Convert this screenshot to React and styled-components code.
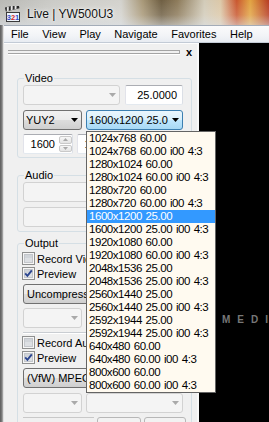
import React from "react";
import styled, { createGlobalStyle, css } from "styled-components";

const GlobalStyle = createGlobalStyle`
  html, body { margin: 0; padding: 0; width: 269px; height: 422px; overflow: hidden; background: #000; }
  #root { width: 269px; height: 422px; }
  * { box-sizing: border-box; }
`;

const FONT = `"Liberation Sans", Arial, sans-serif`;

const Window = styled.div`
  position: relative;
  width: 269px;
  height: 422px;
  overflow: hidden;
  display: flex;
  flex-direction: column;
  background: #000;
  font-family: ${FONT};
  font-size: 11px;
  color: #000;
`;

const TitleBar = styled.div`
  flex: none;
  height: 25px;
  display: flex;
  align-items: center;
  gap: 6px;
  padding: 3px 0 0 5px;
  background:
    linear-gradient(to bottom, rgba(255,255,255,0) 0%, rgba(255,255,255,0.15) 60%, rgba(225,230,236,0.55) 100%),
    linear-gradient(to right, #b9b9b5 0%, #cbcbc7 20%, #d3d2cd 45%, #a89878 53%, #6f5f43 60%, #8d7b5b 66%, #d2cbb9 76%, #dcc8a8 82%, #c9572f 88%, #e2a442 93%, #b63b22 100%);
`;

const TitleText = styled.span`
  font-size: 12px;
  color: #111;
  text-shadow: 0 0 5px rgba(255,255,255,0.95), 0 0 2px rgba(255,255,255,0.9);
  white-space: nowrap;
`;

const Body = styled.div`
  flex: 1;
  display: flex;
  min-height: 0;
`;

const Frame = styled.div`
  flex: none;
  width: 4px;
  background: linear-gradient(to right, #5c5c5c 0%, #858585 55%, #d6d6d6 80%, #eeeeee 100%);
`;

const Main = styled.div`
  flex: 1;
  display: flex;
  flex-direction: column;
  min-width: 0;
`;

const MenuBar = styled.div`
  flex: none;
  height: 18px;
  display: flex;
  align-items: center;
  gap: 13.5px;
  padding-left: 7px;
  background: linear-gradient(to bottom, #fbfbfc 0%, #f2f4f7 60%, #e8ecf2 100%);
  border-top: 1px solid #a3acb8;
  border-bottom: 1px solid #c3cbd6;
  white-space: nowrap;
`;

const MenuItem = styled.span`
  font-size: 11px;
  color: #000;
`;

const Content = styled.div`
  flex: 1;
  display: flex;
  min-height: 0;
`;

const Panel = styled.div`
  flex: none;
  width: 195px;
  display: flex;
  flex-direction: column;
  background: #f0f0f0;
  border-top: 1px solid #fdfdfd;
  box-shadow: inset -2px 0 0 #f9f9f9;
  overflow: hidden;
`;

const GripRow = styled.div`
  flex: none;
  display: flex;
  align-items: flex-start;
  height: 8px;
  margin: 4px 0 0 4px;
`;

const GripLines = styled.div`
  width: 172px;
  height: 4px;
  margin-top: 2px;
  border-top: 1px solid #a4a4a4;
  border-bottom: 1px solid #a4a4a4;
  border-right: 1px solid #a4a4a4;
  box-shadow: 0 1px 0 #ffffff;
`;

const CloseX = styled.span`
  margin-left: 6px;
  font-size: 11px;
  font-weight: bold;
  line-height: 8px;
  margin-top: 0;
`;

const Group = styled.fieldset`
  flex: none;
  width: 175px;
  min-width: 0;
  margin: ${(p) => p.$top}px 0 0 13px;
  padding: 0 5px ${(p) => p.$bottom}px 5px;
  border: 1px solid #d5dfe5;
  border-radius: 3px;
`;

const Legend = styled.legend`
  margin-left: 1px;
  padding: 0 1px;
  font-size: 11px;
  line-height: 14px;
`;

const Stack = styled.div`
  display: flex;
  flex-direction: column;
`;

const Row = styled.div`
  display: flex;
  gap: ${(p) => p.$gap ?? 4}px;
  margin-top: ${(p) => p.$mt ?? 0}px;
  height: ${(p) => p.$h ?? 20}px;
`;

const comboVariants = {
  disabled: css`
    background: #f4f4f4;
    border: 1px solid #d2d2d2;
    color: #8a8a8a;
  `,
  normal: css`
    background: linear-gradient(to bottom, #f2f2f2 0%, #ebebeb 48%, #dddddd 52%, #cfcfcf 100%);
    border: 1px solid #707070;
  `,
  hot: css`
    background: linear-gradient(to bottom, #eaf6fd 0%, #d9f0fc 48%, #bee6fd 52%, #a7d9f5 100%);
    border: 1px solid #3c7fb1;
  `,
};

const Combo = styled.div`
  flex: none;
  width: ${(p) => p.$w}px;
  height: 20px;
  display: flex;
  align-items: center;
  gap: 4px;
  padding: 0 3px 0 2px;
  border-radius: 3px;
  white-space: nowrap;
  overflow: hidden;
  ${(p) => comboVariants[p.$variant || "normal"]}
`;

const ComboText = styled.span`
  flex: 1;
  min-width: 0;
  overflow: hidden;
  white-space: nowrap;
`;

const Arrow = ({ color }) => (
  <svg width="7" height="4" viewBox="0 0 7 4" style={{ flex: "none" }}>
    <polygon points="0,0 7,0 3.5,4" fill={color} />
  </svg>
);

const TextBox = styled.div`
  flex: none;
  width: ${(p) => p.$w}px;
  height: 20px;
  display: flex;
  align-items: center;
  justify-content: flex-end;
  padding: 0 5px;
  background: #fff;
  border: 1px solid;
  border-color: #abadb3 #dbdfe6 #e3e9ef #e2e3ea;
  border-radius: 2px;
`;

const SpinBox = styled.div`
  flex: none;
  width: ${(p) => p.$w}px;
  height: 20px;
  display: flex;
  align-items: stretch;
  background: #fff;
  border: 1px solid;
  border-color: #abadb3 #dbdfe6 #e3e9ef #e2e3ea;
  border-radius: 2px;
`;

const SpinValue = styled.span`
  flex: 1;
  display: flex;
  align-items: center;
  justify-content: flex-end;
  padding: 0 4px 0 3px;
  overflow: hidden;
`;

const SpinButtons = styled.div`
  flex: none;
  width: 13px;
  display: flex;
  flex-direction: column;
  gap: 1px;
  padding: 1px 0;
`;

const SpinButton = styled.div`
  flex: 1;
  display: flex;
  align-items: center;
  justify-content: center;
  background: linear-gradient(to bottom, #f7f7f7, #e4e4e4);
  border: 1px solid #c9c9c9;
  border-radius: 2px;
`;

const SmallTri = ({ up }) => (
  <svg width="5" height="3" viewBox="0 0 5 3">
    <polygon points={up ? "0,3 5,3 2.5,0" : "0,0 5,0 2.5,3"} fill="#a9a9a9" />
  </svg>
);

const CheckRow = styled.div`
  display: flex;
  align-items: center;
  gap: 2px;
  height: 15px;
  margin-top: ${(p) => p.$mt ?? 0}px;
  margin-left: -1px;
  white-space: nowrap;
`;

const CheckBox = ({ checked }) => (
  <svg width="13" height="13" viewBox="0 0 13 13" style={{ flex: "none" }}>
    <rect x="0.5" y="0.5" width="12" height="12" fill="#f6f6f6" stroke="#8e8f8f" />
    <rect x="2.5" y="2.5" width="8" height="8" fill="#dcdfe3" stroke="#c3c6cb" />
    <rect x="3" y="3" width="7" height="3" fill="#d0d4d9" />
    {checked && (
      <path d="M3.2 6.4 L5.4 8.8 L9.8 3.4" fill="none" stroke="#2b4590" strokeWidth="1.9" />
    )}
  </svg>
);

const Button = styled.div`
  flex: none;
  width: ${(p) => p.$w}px;
  height: 20px;
  margin-top: ${(p) => p.$mt ?? 0}px;
  display: flex;
  align-items: center;
  padding: 0 3px;
  background: linear-gradient(to bottom, #f2f2f2 0%, #ebebeb 48%, #dddddd 52%, #cfcfcf 100%);
  border: 1px solid #707070;
  border-radius: 3px;
  white-space: nowrap;
  overflow: hidden;
`;

const Separator = styled.div`
  height: 2px;
  margin-top: ${(p) => p.$mt}px;
  border-top: 1px solid #c9cdd2;
  border-bottom: 1px solid #ffffff;
`;

const BottomRow = styled.div`
  display: flex;
  gap: 3px;
  margin-top: ${(p) => p.$mt}px;
  height: 20px;
`;

const Ledge = styled.div`
  width: 71px;
  border-top: 1px solid #c8c8c8;
`;

const GhostButton = styled.div`
  width: ${(p) => p.$w}px;
  border: 1px solid #b7b7b7;
  border-radius: 3px;
  background: #f2f2f2;
`;

const Video = styled.div`
  flex: 1;
  min-width: 0;
  background: #000;
  padding: 271px 0 0 23px;
  overflow: hidden;
`;

const Watermark = styled.div`
  font-size: 10px;
  font-weight: bold;
  line-height: 12px;
  letter-spacing: 7px;
  color: #777777;
  white-space: nowrap;
`;

const DropList = styled.ul`
  position: absolute;
  left: 86px;
  top: 131px;
  width: 130px;
  height: 262px;
  margin: 0;
  padding: 0;
  list-style: none;
  background: #fffaf0;
  border: 1px solid #646464;
  overflow: hidden;
`;

const DropItem = styled.li`
  height: 13px;
  line-height: 13px;
  padding-left: 2px;
  font-size: 11.5px;
  letter-spacing: -0.45px;
  word-spacing: 1px;
  white-space: nowrap;
  color: ${(p) => (p.$selected ? "#fff" : "#000")};
  background: ${(p) => (p.$selected ? "#3399ff" : "transparent")};
`;

const AppIcon = () => (
  <svg width="16" height="16" viewBox="0 0 16 16" style={{ flex: "none" }}>
    <g transform="rotate(-14 1 6)">
      <rect x="1" y="1.5" width="14" height="4" fill="#2a2a2a" />
      <path d="M3 1.5 H5 L4 5.5 H2 Z M7 1.5 H9 L8 5.5 H6 Z M11 1.5 H13 L12 5.5 H10 Z" fill="#e8e8e8" />
    </g>
    <rect x="1.5" y="6.5" width="13" height="9" fill="#eef3fa" stroke="#3a3a3a" />
    <text x="8" y="14" fontSize="7.5" fontWeight="bold" textAnchor="middle" fontFamily="Liberation Sans, Arial, sans-serif">
      <tspan fill="#2d4fc8">3</tspan>
      <tspan fill="#d42222">2</tspan>
      <tspan fill="#2d4fc8">1</tspan>
    </text>
  </svg>
);

const modes = [
  "1024x768 60.00",
  "1024x768 60.00 i00 4:3",
  "1280x1024 60.00",
  "1280x1024 60.00 i00 4:3",
  "1280x720 60.00",
  "1280x720 60.00 i00 4:3",
  "1600x1200 25.00",
  "1600x1200 25.00 i00 4:3",
  "1920x1080 60.00",
  "1920x1080 60.00 i00 4:3",
  "2048x1536 25.00",
  "2048x1536 25.00 i00 4:3",
  "2560x1440 25.00",
  "2560x1440 25.00 i00 4:3",
  "2592x1944 25.00",
  "2592x1944 25.00 i00 4:3",
  "640x480 60.00",
  "640x480 60.00 i00 4:3",
  "800x600 60.00",
  "800x600 60.00 i00 4:3",
];

const menus = ["File", "View", "Play", "Navigate", "Favorites", "Help"];

export default function App() {
  return (
    <>
      <GlobalStyle />
      <Window>
        <TitleBar>
          <AppIcon />
          <TitleText>Live | YW500U3</TitleText>
        </TitleBar>
        <Body>
          <Frame />
          <Main>
            <MenuBar>
              {menus.map((m) => (
                <MenuItem key={m}>{m}</MenuItem>
              ))}
            </MenuBar>
            <Content>
              <Panel>
                <GripRow>
                  <GripLines />
                  <CloseX>x</CloseX>
                </GripRow>

                <Group $top={15} $bottom={3}>
                  <Legend>Video</Legend>
                  <Stack>
                    <Row $gap={5}>
                      <Combo $w={97} $variant="disabled">
                        <ComboText />
                        <Arrow color="#a9a9a9" />
                      </Combo>
                      <TextBox $w={58}>25.0000</TextBox>
                    </Row>
                    <Row $mt={5}>
                      <Combo $w={59}>
                        <ComboText>YUY2</ComboText>
                        <Arrow color="#000" />
                      </Combo>
                      <Combo $w={97} $variant="hot">
                        <ComboText>1600x1200 25.00</ComboText>
                        <Arrow color="#000" />
                      </Combo>
                    </Row>
                    <Row $mt={4}>
                      <SpinBox $w={50}>
                        <SpinValue>1600</SpinValue>
                        <SpinButtons>
                          <SpinButton><SmallTri up /></SpinButton>
                          <SpinButton><SmallTri /></SpinButton>
                        </SpinButtons>
                      </SpinBox>
                      <SpinBox $w={50}>
                        <SpinValue>1200</SpinValue>
                        <SpinButtons>
                          <SpinButton><SmallTri up /></SpinButton>
                          <SpinButton><SmallTri /></SpinButton>
                        </SpinButtons>
                      </SpinBox>
                    </Row>
                  </Stack>
                </Group>

                <Group $top={10} $bottom={4}>
                  <Legend>Audio</Legend>
                  <Stack>
                    <Row>
                      <Combo $w={160} $variant="disabled">
                        <ComboText />
                        <Arrow color="#a9a9a9" />
                      </Combo>
                    </Row>
                    <Row $mt={5}>
                      <Combo $w={160} $variant="disabled">
                        <ComboText />
                        <Arrow color="#a9a9a9" />
                      </Combo>
                    </Row>
                  </Stack>
                </Group>

                <Group $top={4} $bottom={20}>
                  <Legend>Output</Legend>
                  <Stack>
                    <CheckRow $mt={1}>
                      <CheckBox />
                      <span>Record Video</span>
                    </CheckRow>
                    <CheckRow>
                      <CheckBox checked />
                      <span>Preview</span>
                    </CheckRow>
                    <Button $w={160} $mt={3}>Uncompressed</Button>
                    <Row $mt={4}>
                      <Combo $w={59} $variant="disabled">
                        <ComboText />
                        <Arrow color="#a9a9a9" />
                      </Combo>
                      <Combo $w={97} $variant="disabled">
                        <ComboText />
                        <Arrow color="#a9a9a9" />
                      </Combo>
                    </Row>
                    <Separator $mt={4} />
                    <CheckRow $mt={1}>
                      <CheckBox />
                      <span>Record Audio</span>
                    </CheckRow>
                    <CheckRow>
                      <CheckBox checked />
                      <span>Preview</span>
                    </CheckRow>
                    <Button $w={160} $mt={3}>(VfW) MPEG Layer-3</Button>
                    <Row $mt={5}>
                      <Combo $w={59} $variant="disabled">
                        <ComboText />
                        <Arrow color="#a9a9a9" />
                      </Combo>
                      <Combo $w={97} $variant="disabled">
                        <ComboText />
                        <Arrow color="#a9a9a9" />
                      </Combo>
                    </Row>
                    <BottomRow $mt={4}>
                      <Ledge />
                      <GhostButton $w={44} />
                      <GhostButton $w={42} />
                    </BottomRow>
                  </Stack>
                </Group>
              </Panel>
              <Video>
                <Watermark>MEDIA</Watermark>
              </Video>
            </Content>
          </Main>
        </Body>

        <DropList>
          {modes.map((m, i) => (
            <DropItem key={m} $selected={i === 6}>
              {m}
            </DropItem>
          ))}
        </DropList>
      </Window>
    </>
  );
}
